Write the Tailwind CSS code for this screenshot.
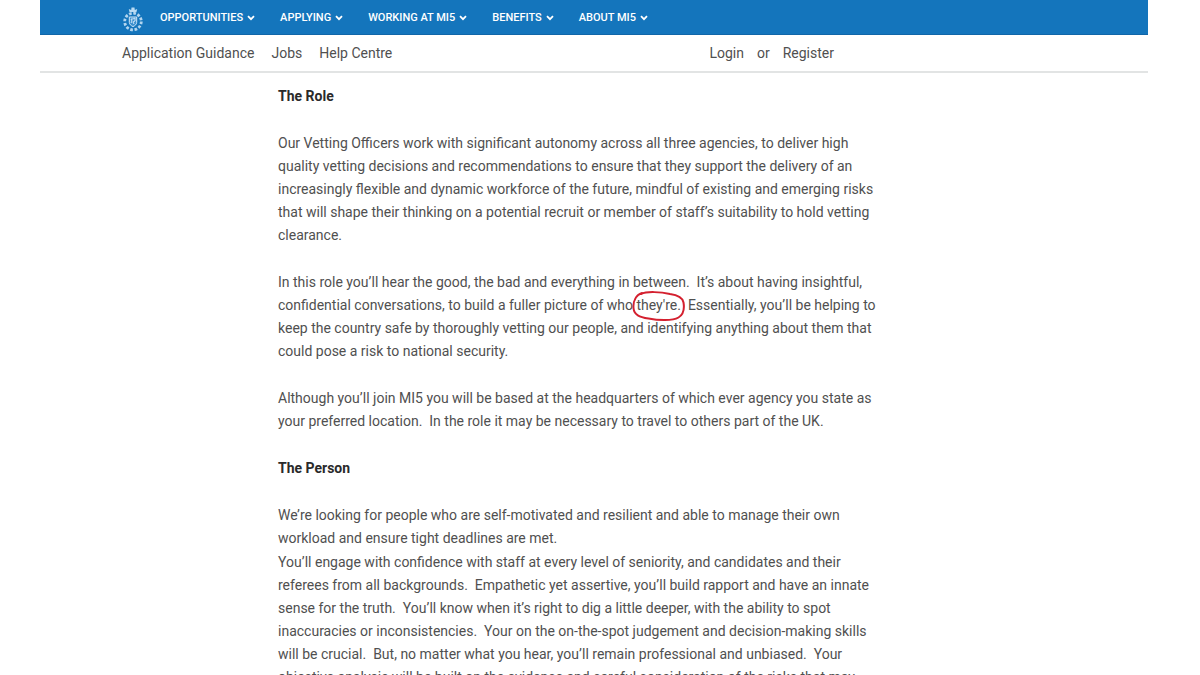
<!DOCTYPE html>
<html lang="en">
<head>
<meta charset="utf-8">
<meta name="viewport" content="width=device-width, initial-scale=1">
<title>Vetting Officer - MI5 Careers</title>
<script src="https://cdn.jsdelivr.net/npm/@tailwindcss/browser@4"></script>
</head>
<body class="h-screen overflow-hidden bg-white font-['Roboto',sans-serif] text-sm text-[#505050]">
<div class="ml-10 mr-[52px]">
  <header>
    <div class="flex h-[35px] items-center bg-[#1475bc] border-b border-[#1166a8] pl-[82px] text-white">
      <a href="#" aria-label="MI5 home" class="mr-4 mt-1">
        <svg class="h-[26px] w-[22px]" viewBox="0 0 22 26" fill="none" stroke="#cfe6f8">
          <circle cx="11" cy="15.5" r="8.3" stroke-width="2.8" stroke-dasharray="2.7 1.65" opacity=".85"/>
          <path d="M7.5 6 6.800 3l2.400 1L9.500 1.500h3L12.800 4l2.400-1-.7 3z" fill="#b9dbf3" stroke="none"/>
          <path d="M7.3 11h7.4v5.4c0 2-1.7 3.2-3.7 4.2-2-1-3.7-2.200-3.700-4.200z" fill="#3d91cf" stroke-width="1"/>
          <path d="m9 17 1-2-1-2h2l2-1v3l-2 1 1 2" stroke-width="1"/>
        </svg>
      </a>
      <nav aria-label="Main" class="flex items-center gap-[25px] pt-0.5 text-[11px] font-medium">
        <button class="flex items-center gap-1 whitespace-nowrap">OPPORTUNITIES <svg class="h-[6px] w-2" viewBox="0 0 8 6" fill="none" stroke="currentColor" stroke-width="1.8"><path d="m1 1.200 3 3 3-3"/></svg></button>
        <button class="flex items-center gap-1 whitespace-nowrap">APPLYING <svg class="h-[6px] w-2" viewBox="0 0 8 6" fill="none" stroke="currentColor" stroke-width="1.8"><path d="m1 1.200 3 3 3-3"/></svg></button>
        <button class="flex items-center gap-1 whitespace-nowrap">WORKING AT MI5 <svg class="h-[6px] w-2" viewBox="0 0 8 6" fill="none" stroke="currentColor" stroke-width="1.8"><path d="m1 1.200 3 3 3-3"/></svg></button>
        <button class="flex items-center gap-1 whitespace-nowrap">BENEFITS <svg class="h-[6px] w-2" viewBox="0 0 8 6" fill="none" stroke="currentColor" stroke-width="1.8"><path d="m1 1.200 3 3 3-3"/></svg></button>
        <button class="flex items-center gap-1 whitespace-nowrap">ABOUT MI5 <svg class="h-[6px] w-2" viewBox="0 0 8 6" fill="none" stroke="currentColor" stroke-width="1.8"><path d="m1 1.200 3 3 3-3"/></svg></button>
      </nav>
    </div>
    <div class="flex h-[38px] items-center justify-between border-b-2 border-[#e2e4e4] pl-[82px] pr-[314px] whitespace-nowrap">
      <nav aria-label="Site" class="flex gap-[17px]"><a href="#">Application Guidance</a><a href="#">Jobs</a><a href="#">Help Centre</a></nav>
      <div class="flex gap-[13px]"><a href="#">Login</a><span>or</span><a href="#">Register</a></div>
    </div>
  </header>
  <main class="pt-3 pl-[238px]">
    <article class="flex flex-col gap-6 leading-[23px] whitespace-nowrap">
      <h2 class="font-bold text-[#2a2a2a]">The Role</h2>
      <p>Our Vetting Officers work with significant autonomy across all three agencies, to deliver high<br>quality vetting decisions and recommendations to ensure that they support the delivery of an<br>increasingly flexible and dynamic workforce of the future, mindful of existing and emerging risks<br>that will shape their thinking on a potential recruit or member of staff’s suitability to hold vetting<br>clearance.</p>
      <p>In this role you’ll hear the good, the bad and everything in between.&nbsp; It’s about having insightful,<br>confidential conversations, to build a fuller picture of who <span class="relative inline-block">they're.<svg aria-hidden="true" class="absolute -left-1 -top-1 h-8 w-[54px]" viewBox="0 0 54 32" fill="none" stroke="#d4202f" stroke-width="2" stroke-linecap="round"><path d="M10 3C4 5 1 11 1.500 18c.5 7 6 9 15 10.500 10 2 24 2.500 30-1 5-3 6-9 5-15C50.500 7 46 5 38 4 29 2 15 1 9 4"/></svg></span>&nbsp; Essentially, you’ll be helping to<br>keep the country safe by thoroughly vetting our people, and identifying anything about them that<br>could pose a risk to national security.</p>
      <p>Although you’ll join MI5 you will be based at the headquarters of which ever agency you state as<br>your preferred location.&nbsp; In the role it may be necessary to travel to others part of the UK.</p>
      <h2 class="font-bold text-[#2a2a2a]">The Person</h2>
      <div class="flex flex-col gap-px">
        <p>We’re looking for people who are self-motivated and resilient and able to manage their own<br>workload and ensure tight deadlines are met.</p>
        <p>You’ll engage with confidence with staff at every level of seniority, and candidates and their<br>referees from all backgrounds.&nbsp; Empathetic yet assertive, you’ll build rapport and have an innate<br>sense for the truth.&nbsp; You’ll know when it’s right to dig a little deeper, with the ability to spot<br>inaccuracies or inconsistencies.&nbsp; Your on the on-the-spot judgement and decision-making skills<br>will be crucial.&nbsp; But, no matter what you hear, you’ll remain professional and unbiased.&nbsp; Your<br>objective analysis will be built on the evidence and careful consideration of the risks that may</p>
      </div>
    </article>
  </main>
</div>
</body>
</html>
